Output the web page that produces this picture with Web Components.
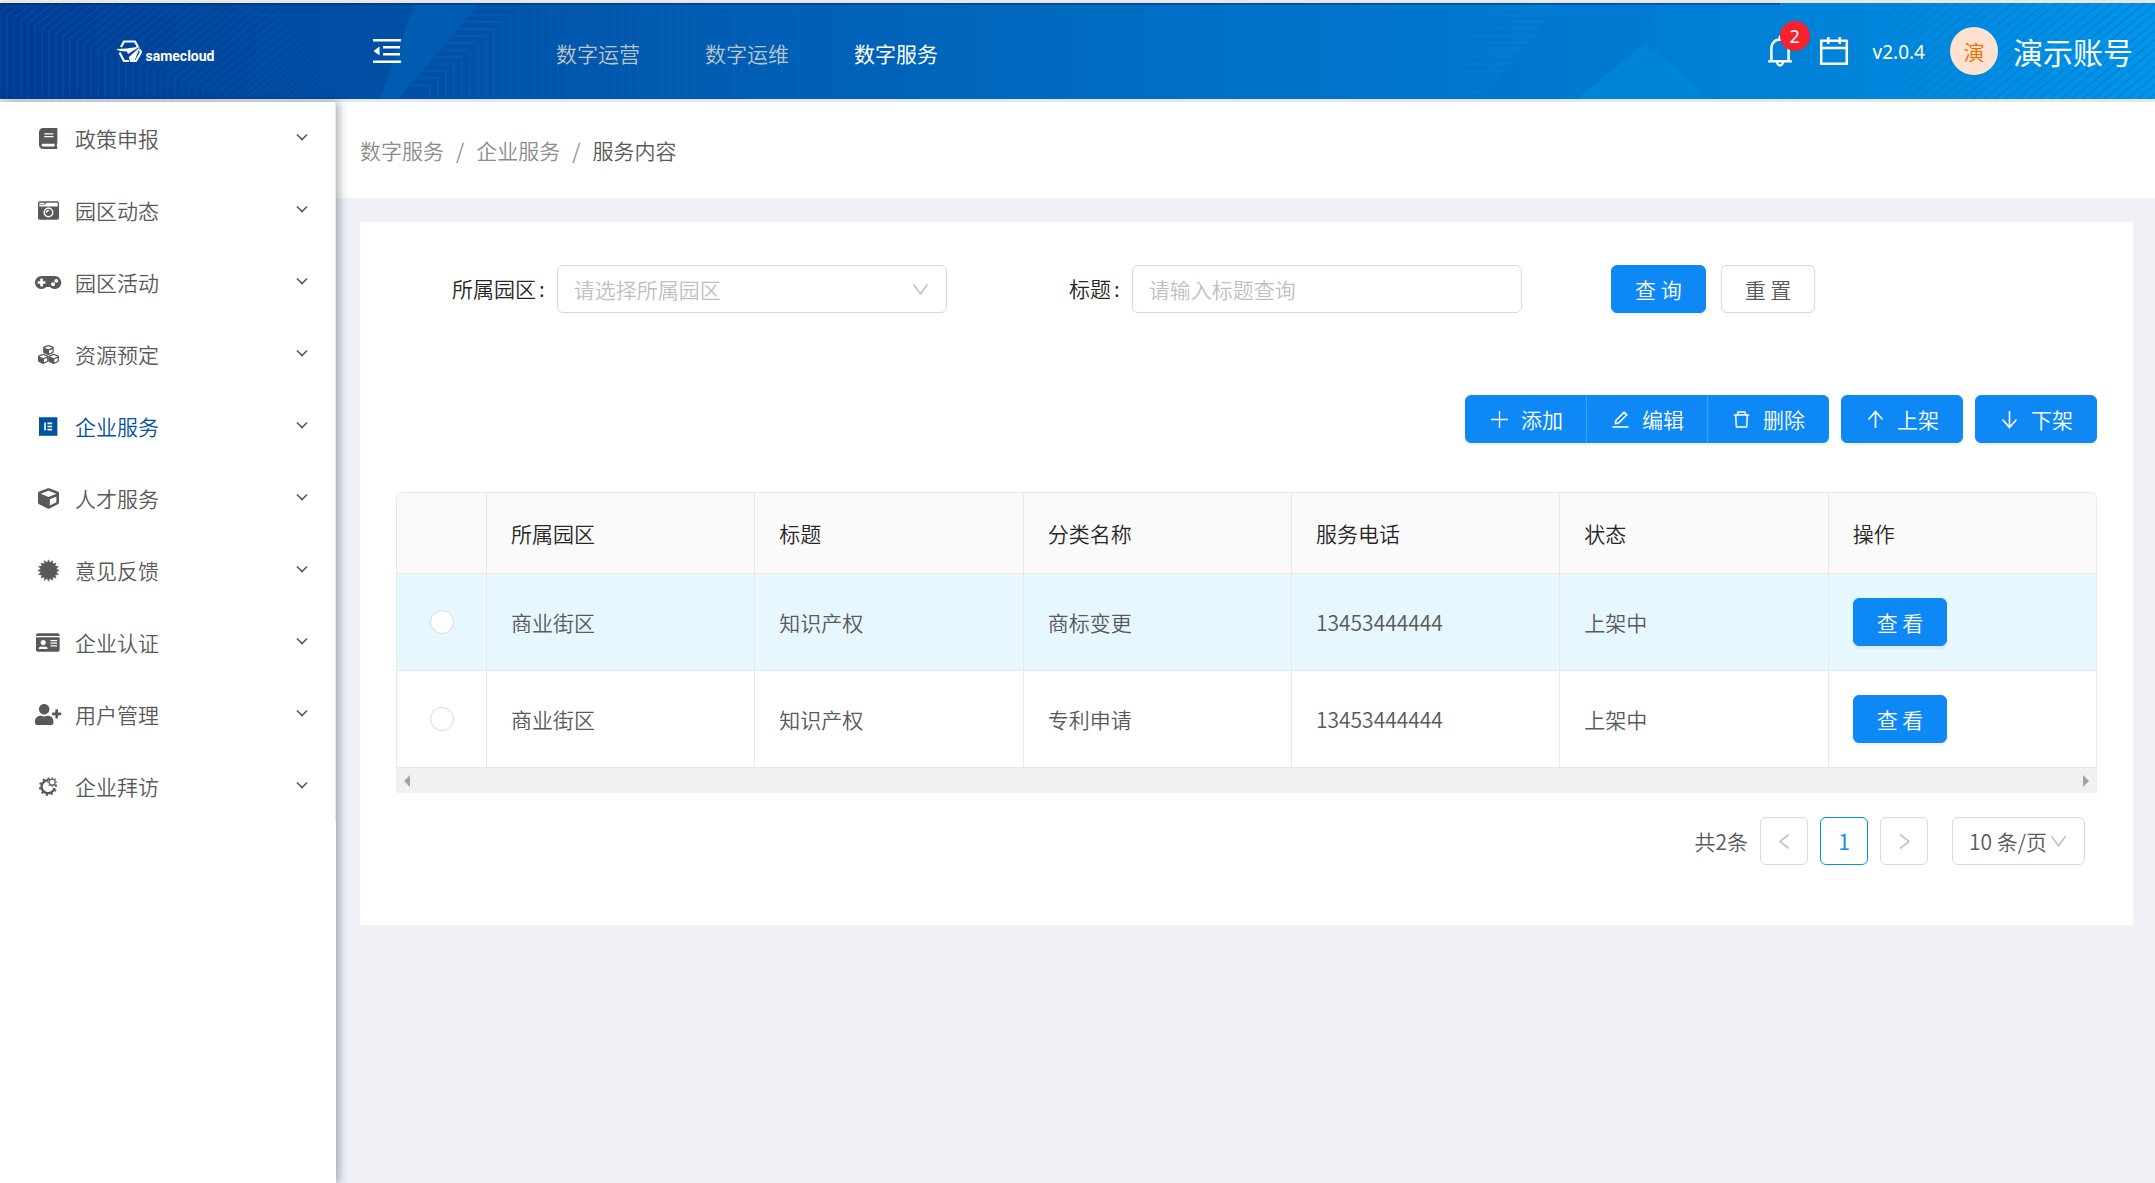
<!DOCTYPE html>
<html lang="zh-CN">
<head>
<meta charset="utf-8">
<title>服务内容</title>
<style>
  html, body { margin: 0; height: 100%; }
  body {
    font: 350 21px/32px "Noto Sans CJK SC", "Noto Sans", sans-serif;
    color: #595959;
    background: #f0f2f5;
  }
</style>
</head>
<body>
<app-shell>
  <app-header slot="header"></app-header>
  <app-sidebar slot="side"></app-sidebar>
  <page-crumbs></page-crumbs>
  <page-card>
    <search-form></search-form>
    <action-bar></action-bar>
    <service-table></service-table>
    <page-pager></page-pager>
  </page-card>
</app-shell>

<script>
function define(name, css, html) {
  customElements.define(name, class extends HTMLElement {
    constructor() {
      super();
      const root = this.attachShadow({ mode: 'open' });
      root.innerHTML = '<style>*{box-sizing:border-box}' + css + '</style>' +
        (typeof html === 'function' ? html(this) : html);
    }
  });
}

/* ---------- icons ---------- */
const CUBE = 'M239.1 6.3l-208 78c-18.7 7-31.1 25-31.1 45v225.1c0 18.2 10.3 34.8 26.5 42.9l208 104c13.5 6.8 29.4 6.8 42.9 0l208-104c16.3-8.1 26.5-24.8 26.5-42.9V129.3c0-20-12.4-37.9-31.1-44.9l-208-78C262 2.2 250 2.2 239.1 6.3zM256 68.4l192 72v1.1l-192 78-192-78v-1.1l192-72zm32 356V275.5l160-65v133.9l-160 80z';

function star(cx, cy, outer, inner, points) {
  const p = [];
  for (let i = 0; i < points * 2; i++) {
    const r = i % 2 ? inner : outer, a = Math.PI * i / points - Math.PI / 2;
    p.push((cx + r * Math.cos(a)).toFixed(1) + ' ' + (cy + r * Math.sin(a)).toFixed(1));
  }
  return 'M' + p.join('L') + 'z';
}
function teeth(cx, cy, r1, r2, count, width, from, to) {
  let s = '';
  for (let i = 0; i < count; i++) {
    const deg = from + (to - from) * i / (count - 1);
    s += `<rect x="${cx - width / 2}" y="${cy - r2}" width="${width}" height="${r2 - r1}" transform="rotate(${deg} ${cx} ${cy})"/>`;
  }
  return s;
}
const ICONS = {
  book: ['0 0 448 512', '<path d="M448 360V24c0-13.3-10.7-24-24-24H96C43 0 0 43 0 96v320c0 53 43 96 96 96h328c13.3 0 24-10.7 24-24v-16c0-7.5-3.5-14.3-8.9-18.7-4.2-15.4-4.2-59.3 0-74.7 5.4-4.3 8.9-11.1 8.900-18.600zM128 134c0-3.3 2.7-6 6-6h212c3.3 0 6 2.7 6 6v20c0 3.3-2.7 6-6 6H134c-3.3 0-6-2.7-6-6v-20zm0 64c0-3.3 2.7-6 6-6h212c3.3 0 6 2.700 6 6v20c0 3.3-2.700 6-6 6H134c-3.3 0-6-2.700-6-6v-20zm253.400 250H96c-17.700 0-32-14.300-32-32 0-17.600 14.400-32 32-32h285.400c-1.900 17.100-1.900 46.900 0 64z"/>'],
  camera: ['0 0 512 512', '<path d="M48 32C21.5 32 0 53.5 0 80v352c0 26.5 21.5 48 48 48h416c26.5 0 48-21.5 48-48V80c0-26.5-21.5-48-48-48H48zm0 32h106c3.3 0 6 2.7 6 6v20c0 3.3-2.7 6-6 6H38c-3.3 0-6-2.7-6-6V80c0-8.8 7.2-16 16-16zm426 96H38c-3.3 0-6-2.7-6-6v-36c0-3.3 2.7-6 6-6h138l30.2-45.3c1.1-1.7 3-2.7 5-2.7H464c8.800 0 16 7.200 16 16v74c0 3.300-2.700 6-6 6zM256 424c-66.200 0-120-53.800-120-120s53.800-120 120-120 120 53.800 120 120-53.800 120-120 120zm0-208c-48.500 0-88 39.500-88 88s39.500 88 88 88 88-39.500 88-88-39.500-88-88-88zm-48 104c-8.800 0-16-7.200-16-16 0-35.300 28.700-64 64-64 8.800 0 16 7.200 16 16s-7.200 16-16 16c-17.600 0-32 14.400-32 32 0 8.800-7.200 16-16 16z"/>'],
  gamepad: ['0 0 640 512', '<path d="M480 96H160C71.6 96 0 167.6 0 256s71.6 160 160 160c44.8 0 85.2-18.4 114.2-48h91.5c29 29.6 69.5 48 114.2 48 88.4 0 160-71.6 160-160S568.4 96 480 96zM256 276c0 6.6-5.4 12-12 12h-52v52c0 6.6-5.4 12-12 12h-40c-6.600 0-12-5.400-12-12v-52H76c-6.600 0-12-5.400-12-12v-40c0-6.600 5.400-12 12-12h52v-52c0-6.600 5.400-12 12-12h40c6.600 0 12 5.400 12 12v52h52c6.600 0 12 5.400 12 12v40zm184 68c-26.500 0-48-21.500-48-48s21.500-48 48-48 48 21.500 48 48-21.500 48-48 48zm80-80c-26.500 0-48-21.500-48-48s21.500-48 48-48 48 21.500 48 48-21.500 48-48 48z"/>'],
  cubes: ['0 0 512 512', `<g transform="translate(126 20) scale(.5)"><path d="${CUBE}"/></g><g transform="translate(0 236) scale(.5)"><path d="${CUBE}"/></g><g transform="translate(254 236) scale(.5)"><path d="${CUBE}"/></g>`],
  blocks: ['0 0 448 512', '<path fill-rule="evenodd" d="M0 32h448v448H0zM128 160v192h40V160zM206 160v40h114v-40zM206 236v40h114v-40zM206 312v40h114v-40z"/>'],
  cube: ['0 0 512 512', `<path d="${CUBE}"/>`],
  certificate: ['0 0 512 512', `<path d="${star(256, 256, 262, 192, 16)}" stroke="currentColor" stroke-width="12" stroke-linejoin="round"/>`],
  idcard: ['0 0 576 512', '<path fill-rule="evenodd" d="M528 32H48C21.5 32 0 53.5 0 80v16h576V80c0-26.5-21.5-48-48-48zM0 432c0 26.5 21.5 48 48 48h480c26.5 0 48-21.5 48-48V128H0zM352 192h160v32H352zM352 256h160v32H352zM352 320h160v32H352zM176 192c35.3 0 64 28.7 64 64s-28.7 64-64 64-64-28.7-64-64 28.7-64 64-64zM67.100 396.200C75.500 370.500 99.600 352 128 352h8.200c12.300 5.100 25.700 8 39.800 8s27.600-2.900 39.800-8h8.200c28.400 0 52.500 18.500 60.900 44.200 3.200 9.900-5.200 19.800-15.600 19.800H82.700c-10.400 0-18.800-10-15.600-19.800z"/>'],
  userplus: ['0 0 640 512', '<path d="M624 208h-64v-64c0-8.8-7.2-16-16-16h-32c-8.8 0-16 7.2-16 16v64h-64c-8.8 0-16 7.2-16 16v32c0 8.8 7.2 16 16 16h64v64c0 8.8 7.2 16 16 16h32c8.800 0 16-7.200 16-16v-64h64c8.800 0 16-7.200 16-16v-32c0-8.800-7.200-16-16-16zm-400 48c70.700 0 128-57.300 128-128S294.700 0 224 0 96 57.300 96 128s57.300 128 128 128zm89.600 32h-16.700c-22.200 10.200-46.900 16-72.900 16s-50.600-5.800-72.900-16h-16.700C60.200 288 0 348.200 0 422.400V464c0 26.500 21.500 48 48 48h352c26.500 0 48-21.500 48-48v-41.600c0-74.200-60.200-134.400-134.400-134.400z"/>'],
  gears: ['0 0 448 512', `<path d="M232 104A158 158 0 1 0 376 290" fill="none" stroke="currentColor" stroke-width="58"/>${teeth(218, 262, 170, 222, 9, 50, 82, 364)}<circle cx="322" cy="150" r="74" fill="none" stroke="currentColor" stroke-width="28"/>${teeth(322, 150, 84, 120, 8, 28, 0, 315)}`],
  down: ['0 0 12 8', '<path d="M1 1.500l5 5 5-5" fill="none" stroke="currentColor" stroke-width="1.700"/>'],
  caret: ['0 0 1024 1024', '<path d="M884 256h-75c-5.100 0-9.900 2.500-12.900 6.600L512 654.200 227.900 262.600c-3-4.100-7.800-6.600-12.900-6.600h-75c-6.500 0-10.300 7.400-6.500 12.700l352.600 486.100c12.800 17.600 39 17.600 51.700 0l352.600-486.100c3.900-5.300.1-12.700-6.400-12.700z"/>'],
  left: ['0 0 1024 1024', '<path d="M724 218.300V141c0-6.700-7.700-10.400-12.900-6.300L260.300 486.800a31.860 31.860 0 0 0 0 50.300l450.800 352.100c5.300 4.100 12.900.4 12.900-6.300v-77.300c0-4.900-2.300-9.600-6.100-12.600l-360-281 360-281.100c3.800-3 6.100-7.700 6.100-12.600z"/>'],
  right: ['0 0 1024 1024', '<path d="M765.700 486.800L314.900 134.700A7.970 7.970 0 0 0 302 141v77.300c0 4.900 2.300 9.600 6.100 12.600l360 281.100-360 281.100c-3.900 3-6.100 7.700-6.100 12.600V883c0 6.700 7.700 10.400 12.900 6.300l450.800-352.100a31.960 31.960 0 0 0 0-50.400z"/>'],
  plus: ['0 0 21 21', '<path d="M10.500 2v17M2 10.500h17" fill="none" stroke="currentColor" stroke-width="1.300"/>'],
  edit: ['0 0 1024 1024', '<path d="M257.700 752c2 0 4-.2 6-.5L431.900 722c2-.4 3.900-1.300 5.300-2.800l423.900-423.900a9.960 9.960 0 0 0 0-14.100L694.900 114.900c-1.900-1.900-4.400-2.900-7.100-2.900s-5.200 1-7.100 2.900L256.800 538.800c-1.500 1.500-2.400 3.300-2.800 5.300l-29.500 168.200a33.500 33.500 0 0 0 9.400 29.800c6.600 6.400 14.900 9.900 23.800 9.900zm67.400-174.400L687.800 215l73.300 73.300-362.700 362.600-88.900 15.700 15.600-89zM880 836H144c-17.700 0-32 14.300-32 32v36c0 4.400 3.600 8 8 8h784c4.400 0 8-3.600 8-8v-36c0-17.700-14.300-32-32-32z"/>'],
  trash: ['0 0 1024 1024', '<path d="M360 184h-8c4.400 0 8-3.600 8-8v8h304v-8c0 4.400 3.600 8 8 8h-8v72h72v-80c0-35.300-28.700-64-64-64H352c-35.300 0-64 28.700-64 64v80h72v-72zm504 72H160c-17.700 0-32 14.300-32 32v32c0 4.400 3.600 8 8 8h60.400l24.700 523c1.600 34.100 29.800 61 63.900 61h454c34.200 0 62.300-26.800 63.900-61l24.700-523H888c4.400 0 8-3.600 8-8v-32c0-17.700-14.300-32-32-32zM731.300 840H292.700l-24.200-512h487l-24.200 512z"/>'],
  up: ['0 0 21 21', '<path d="M10.500 19V2.500M3.500 10.500l7-8 7 8" fill="none" stroke="currentColor" stroke-width="1.600"/>'],
  downarrow: ['0 0 21 21', '<path d="M10.500 2v16.500M3.500 10.500l7 8 7-8" fill="none" stroke="currentColor" stroke-width="1.600"/>'],
  bell: ['0 0 1024 1024', '<path d="M816 768h-24V428c0-141.100-104.300-257.700-240-277.100V112c0-22.100-17.900-40-40-40s-40 17.900-40 40v38.900c-135.700 19.400-240 136-240 277.100v340h-24c-17.700 0-32 14.300-32 32v32c0 4.400 3.600 8 8 8h216c0 61.800 50.200 112 112 112s112-50.200 112-112h216c4.400 0 8-3.600 8-8v-32c0-17.700-14.300-32-32-32zM512 888c-26.500 0-48-21.500-48-48h96c0 26.500-21.500 48-48 48zM304 768V428c0-55.600 21.600-107.800 60.900-147.100S456.400 220 512 220c55.600 0 107.800 21.600 147.100 60.900S720 372.400 720 428v340H304z"/>'],
  calendar: ['0 0 1024 1024', '<path d="M880 184H712v-64c0-4.400-3.600-8-8-8h-56c-4.400 0-8 3.600-8 8v64H384v-64c0-4.400-3.600-8-8-8h-56c-4.400 0-8 3.600-8 8v64H144c-17.700 0-32 14.300-32 32v664c0 17.700 14.300 32 32 32h736c17.700 0 32-14.300 32-32V216c0-17.700-14.300-32-32-32zm-40 656H184V460h656v380zM184 392V256h128v48c0 4.400 3.600 8 8 8h56c4.400 0 8-3.600 8-8v-48h256v48c0 4.400 3.600 8 8 8h56c4.400 0 8-3.600 8-8v-48h128v136H184z"/>'],
  fold: ['0 0 28 24', '<path d="M0 0h28v2.500H0zM10 7h17v2.500H10zM10 14h17v2.500H10zM0 21.500h28V24H0zM.5 12l6-4.500v9z"/>'],
  mark: ['0 0 26 23', '<path d="M5 7L8 1.500h11L22 7" fill="none" stroke="currentColor" stroke-width="2.200"/><path d="M3.500 12.500L8 21h5M23.500 9.500L25 12l-5 9h-3" fill="none" stroke="currentColor" stroke-width="2.200"/><path d="M0 9l11-.5L24 6.500 12 14l-1-2.500L4 11zM24 7l-6 15h-4l-1-5z"/>']
};
define('ui-icon', ':host{display:inline-flex;align-items:center;justify-content:center;width:21px;height:21px;flex:none}svg{display:block;height:100%;width:auto;max-width:none;fill:currentColor;overflow:visible}',
  el => { const [box, body] = ICONS[el.getAttribute('name')] || ['0 0 1 1', '']; return `<svg viewBox="${box}" aria-hidden="true">${body}</svg>`; });

/* ---------- shell ---------- */
define('app-shell', `
  :host{display:flex;flex-direction:column;min-height:100vh;background:#f0f1f6}
  .body{display:flex;flex:1;border-top:3px solid #e4e7ec}
  main{flex:1;min-width:0}`,
  `<slot name="header"></slot><div class="body"><slot name="side"></slot><main><slot></slot></main></div>`);

/* ---------- header ---------- */
function headerArt() {
  let bend = '', nest = '', vert = '', rows = '';
  for (let i = -24; i < 60; i++) {
    const x = i * 7, y = 10 + x * 0.37;
    bend += `M${x} 96V${Math.min(96, y)}l140 -112`;
  }
  for (let i = 0; i < 12; i++) nest += `M380 ${82 - i * 7}H${430 + i * 8}V96`;
  for (let x = 526; x < 800; x += 8) vert += `M${x} 0V96`;
  for (let x = 1350; x < 1425; x += 7) vert += `M${x} 0V96`;
  for (let y = 4; y < 96; y += 7) rows += `M1450 ${y}H1600`;
  return `<svg class="art" viewBox="0 0 2155 96" preserveAspectRatio="none" aria-hidden="true">
    <defs>
      <linearGradient id="bg"><stop offset="0" stop-color="#003b94"/><stop offset=".1" stop-color="#00479e"/><stop offset=".25" stop-color="#0055aa"/><stop offset=".4" stop-color="#0062b8"/><stop offset=".55" stop-color="#006fc5"/><stop offset=".7" stop-color="#0079cf"/><stop offset=".85" stop-color="#0083d9"/><stop offset="1" stop-color="#0096ec"/></linearGradient>
      <linearGradient id="side"><stop offset="0" stop-color="#2090e0" stop-opacity="0"/><stop offset="1" stop-color="#2090e0" stop-opacity=".16"/></linearGradient>
      <clipPath id="c1"><path d="M0 0H290L345 96H0z"/></clipPath>
      <clipPath id="c2"><path d="M478 0H560V96H398z"/></clipPath>
      <clipPath id="c3"><path d="M1450 0H1560L1482 96H1450z"/></clipPath>
      <pattern id="thin" width="4" height="4" patternUnits="userSpaceOnUse"><path d="M0 0l4 4" stroke="#0a5cb0" stroke-opacity=".4"/></pattern>
      <pattern id="rise" width="11" height="9" patternUnits="userSpaceOnUse"><path d="M-2 10.600L13 -1.600M-2 1.600L2 -1.600M9 10.600L13 7.400" stroke="#0480d2" stroke-width="1.600"/></pattern>
    </defs>
    <path fill="url(#bg)" d="M0 0H2155V96H0z"/>
    <path d="${bend}" clip-path="url(#c1)" fill="none" stroke="#0754a6" stroke-opacity=".75" stroke-width="1.200"/>
    <path d="M290 0H415L380 96H345z" fill="url(#thin)"/>
    <path d="M415 0H480L398 96H380z" fill="#005cb3"/>
    <path d="${nest}" clip-path="url(#c2)" fill="none" stroke="#0a61b5" stroke-opacity=".65" stroke-width="1.300"/>
    <path d="${vert}" fill="none" stroke="#1480d6" stroke-opacity=".1" stroke-width="2"/>
    <path d="${rows}" clip-path="url(#c3)" fill="none" stroke="url(#side)" stroke-width="2"/>
    <g clip-path="url(#c3)" fill="#2090e0" fill-opacity=".09">${Array.from({ length: 13 }, (_, i) => `<path d="M1450 ${4 + i * 7}H1600v2H1450z"/>`).join('')}</g>
    <path d="M1560 0H1660L1645 40L1577 96H1482z" fill="#0074cc" fill-opacity=".3"/>
    <path d="M1645 40L1577 96H1712z" fill="#0084d8"/>
    <path d="M1870 0H2155V96H1912z" fill="url(#rise)"/>
    <path d="M0 0H1780V1.500H0z" fill="#002a80" fill-opacity=".6"/>
  </svg>`;
}
define('app-header', `
  :host{display:grid;border-top:3px solid #e8e8e8;color:#fff}
  .art,.bar{grid-area:1/1}
  .art{width:100%;height:96px;display:block}
  .bar{display:flex;align-items:center;height:96px;padding-right:22px}
  .logo{width:336px;display:flex;justify-content:center;align-items:flex-end;gap:4px;padding-right:6px}
  .logo ui-icon{width:26px;height:23px}
  .logo b{font:700 14px/14px "Roboto",sans-serif}
  button{all:unset;display:flex;align-items:center;justify-content:center;width:36px;height:36px}
  .fold{margin-left:33px}
  .fold ui-icon{width:28px;height:24px}
  nav{display:flex;gap:65px;margin-left:151px;padding-top:4px;flex:1}
  a{color:#bfc5cc;text-decoration:none;white-space:nowrap}
  a[aria-current]{color:#fff;font-weight:400}
  .tools{display:flex;align-items:center}
  .tools ui-icon{width:36px;height:36px}
  .bell{position:relative}
  .badge{position:absolute;left:18px;top:-12px;width:30px;height:30px;border-radius:50%;background:#f5222d;font:400 18px/30px "Noto Sans",sans-serif;text-align:center}
  .cal{margin-left:18px}
  .ver{margin-left:21px;font:400 19px/32px "Noto Sans",sans-serif;padding-top:2px}
  .avatar{margin-left:25px;width:48px;height:48px;border-radius:50%;background:#fde3cf;color:#f56a00;text-align:center;line-height:48px}
  .name{margin-left:15px;font-size:30px;line-height:48px;white-space:nowrap;font-weight:400}`,
  `${headerArt()}
  <div class="bar">
    <div class="logo"><ui-icon name="mark"></ui-icon><b>samecloud</b></div>
    <button class="fold" aria-label="收起菜单"><ui-icon name="fold"></ui-icon></button>
    <nav><a href="#operate">数字运营</a><a href="#maintain">数字运维</a><a href="#service" aria-current="page">数字服务</a></nav>
    <div class="tools">
      <button class="bell" aria-label="通知"><ui-icon name="bell"></ui-icon><span class="badge">2</span></button>
      <button class="cal" aria-label="日历"><ui-icon name="calendar"></ui-icon></button>
      <span class="ver">v2.0.4</span>
      <span class="avatar">演</span>
      <span class="name">演示账号</span>
    </div>
  </div>`);

/* ---------- sidebar ---------- */
define('side-item', `
  :host{display:block;color:#595959}
  :host([active]){color:#00529f}
  a{display:flex;align-items:center;height:72px;padding:0 27px 0 35px;color:inherit;text-decoration:none}
  .icon{width:26px}
  .text{flex:1;margin-left:14px}
  .chev{width:12px;height:8px;color:#595959;margin-bottom:2px}`,
  el => `<a href="#menu"><ui-icon class="icon" name="${el.getAttribute('icon')}"></ui-icon><span class="text"><slot></slot></span><ui-icon class="chev" name="down"></ui-icon></a>`);
define('app-sidebar', `
  :host{display:block;width:336px;flex:none;background:#fff;box-shadow:3px 0 9px rgba(0,21,41,.35);z-index:1}
  nav{border-right:1px solid #e8e8e8}`,
  '<nav>' + [
    ['book', '政策申报'], ['camera', '园区动态'], ['gamepad', '园区活动'], ['cubes', '资源预定'],
    ['blocks', '企业服务', 1], ['cube', '人才服务'], ['certificate', '意见反馈'], ['idcard', '企业认证'],
    ['userplus', '用户管理'], ['gears', '企业拜访']
  ].map(([i, t, a]) => `<side-item icon="${i}"${a ? ' active' : ''}>${t}</side-item>`).join('') + '</nav>');

/* ---------- page ---------- */
define('page-crumbs', `
  :host{display:block;background:#fff;padding:32px 24px}
  ol{display:flex;list-style:none;margin:0;padding:0;color:#8c8c8c}
  li+li::before{content:"/";margin:0 12px}
  a{color:inherit;text-decoration:none}
  [aria-current]{color:#595959}
  li:last-child::before{color:#8c8c8c}`,
  `<nav aria-label="面包屑"><ol><li><a href="#service">数字服务</a></li><li><a href="#company">企业服务</a></li><li aria-current="page">服务内容</li></ol></nav>`);
define('page-card', `
  :host{display:block;margin:24px 22px 24px 24px;padding:43px 36px 60px;background:#fff}`, '<slot></slot>');

define('ui-button', `
  :host{display:inline-block}
  button{display:flex;align-items:center;gap:11px;height:48px;padding:0 23px;border:1px solid #0d88f5;border-left-color:var(--divider,#0d88f5);border-radius:var(--radius,6px);background:#0d88f5;color:#fff;font:inherit;white-space:nowrap;box-shadow:0 3px 0 rgba(0,0,0,.045)}
  :host([plain]) button{background:#fff;color:#595959;border-color:#d9d9d9;box-shadow:0 3px 0 rgba(0,0,0,.015)}`,
  el => { const i = el.getAttribute('icon'); return `<button type="button">${i ? `<ui-icon name="${i}"></ui-icon>` : ''}<span><slot></slot></span></button>`; });

const FIELD = `
  .pick{display:grid;align-items:center}
  .pick>*{grid-area:1/1}
  .pick ui-icon{justify-self:end;margin-right:16px;color:#bfbfbf;pointer-events:none}
  input,select{appearance:none;width:100%;height:48px;margin:0;padding:0 16px;border:1px solid #d9d9d9;border-radius:6px;background:#fff;color:#bfbfbf;font:inherit}
  input::placeholder{color:#bfbfbf;opacity:1}`;
define('search-form', FIELD + `
  :host{display:block}
  form{display:grid;grid-template-columns:repeat(3,1fr);gap:24px}
  .field{display:grid;grid-template-columns:7fr 17fr;align-items:center}
  label{text-align:right;padding:0 12px 2px 0;color:#262626}
  label::after{content:":";margin-left:3px}
  .btns{display:flex;gap:15px;padding-left:65px}`,
  `<form>
    <div class="field"><label for="park">所属园区</label><div class="pick"><select id="park"><option>请选择所属园区</option><option>商业街区</option></select><ui-icon name="caret"></ui-icon></div></div>
    <div class="field"><label for="title">标题</label><input id="title" type="text" placeholder="请输入标题查询"></div>
    <div class="btns"><ui-button>查 询</ui-button><ui-button plain>重 置</ui-button></div>
  </form>`);

define('action-bar', `
  :host{display:flex;justify-content:flex-end;gap:12px;margin:82px 0 49px}
  .group{display:flex}
  .group ui-button{--radius:0}
  .group ui-button:first-child{--radius:6px 0 0 6px}
  .group ui-button:last-child{--radius:0 6px 6px 0}
  .group ui-button+ui-button{margin-left:-1px;--divider:#3da5ff}`,
  `<div class="group"><ui-button icon="plus">添加</ui-button><ui-button icon="edit">编辑</ui-button><ui-button icon="trash">删除</ui-button></div>
   <ui-button icon="up">上架</ui-button><ui-button icon="downarrow">下架</ui-button>`);

define('service-table', `
  :host{display:block}
  table{width:100%;table-layout:fixed;border-collapse:separate;border-spacing:0;border:solid #e8e8e8;border-width:1px 0 0 1px;border-radius:6px 6px 0 0}
  th,td{padding:24px;border:solid #e8e8e8;border-width:0 1px 1px 0;text-align:left;font-weight:inherit}
  th{background:#fafafa;color:#262626}
  th:first-child{width:90px;border-top-left-radius:6px}
  th:last-child{border-top-right-radius:6px}
  td:first-child{text-align:center;padding:0}
  .hover td{background:#e6f7ff}
  td ui-button{display:block;width:max-content}
  input{appearance:none;display:block;width:24px;height:24px;margin:0 auto;border:1px solid #d9d9d9;border-radius:50%;background:#fff}
  .scroll{display:flex;justify-content:space-between;align-items:center;height:25px;padding:0 8px;background:#f1f1f1}
  .scroll i{border:solid transparent;border-width:6px 0}
  .scroll i:first-child{border-right:6px solid #a3a3a3}
  .scroll i:last-child{border-left:6px solid #a3a3a3}`,
  `<table><thead><tr><th></th><th>所属园区</th><th>标题</th><th>分类名称</th><th>服务电话</th><th>状态</th><th>操作</th></tr></thead><tbody>` +
  [['商标变更', 'hover'], ['专利申请', '']].map(([kind, cls]) =>
    `<tr class="${cls}"><td><input type="radio" name="row" aria-label="${kind}"></td><td>商业街区</td><td>知识产权</td><td>${kind}</td><td>13453444444</td><td>上架中</td><td><ui-button>查 看</ui-button></td></tr>`).join('') +
  `</tbody></table><div class="scroll"><i></i><i></i></div>`);

define('page-pager', FIELD + `
  :host{display:flex;justify-content:flex-end;align-items:center;gap:12px;margin-top:24px;padding-right:12px}
  button{display:flex;align-items:center;justify-content:center;width:48px;height:48px;padding:0;border:1px solid #d9d9d9;border-radius:6px;background:#fff;color:#bfbfbf;font:inherit}
  button[aria-current]{border-color:#0d88f5;color:#0d88f5;font-weight:400}
  .pick{width:133px;margin-left:12px}
  .pick select{color:#595959}`,
  `<span>共2条</span>
   <button aria-label="上一页" disabled><ui-icon name="left"></ui-icon></button>
   <button aria-current="page">1</button>
   <button aria-label="下一页" disabled><ui-icon name="right"></ui-icon></button>
   <div class="pick"><select aria-label="每页条数"><option>10 条/页</option><option>20 条/页</option></select><ui-icon name="caret"></ui-icon></div>`);
</script>
</body>
</html>
